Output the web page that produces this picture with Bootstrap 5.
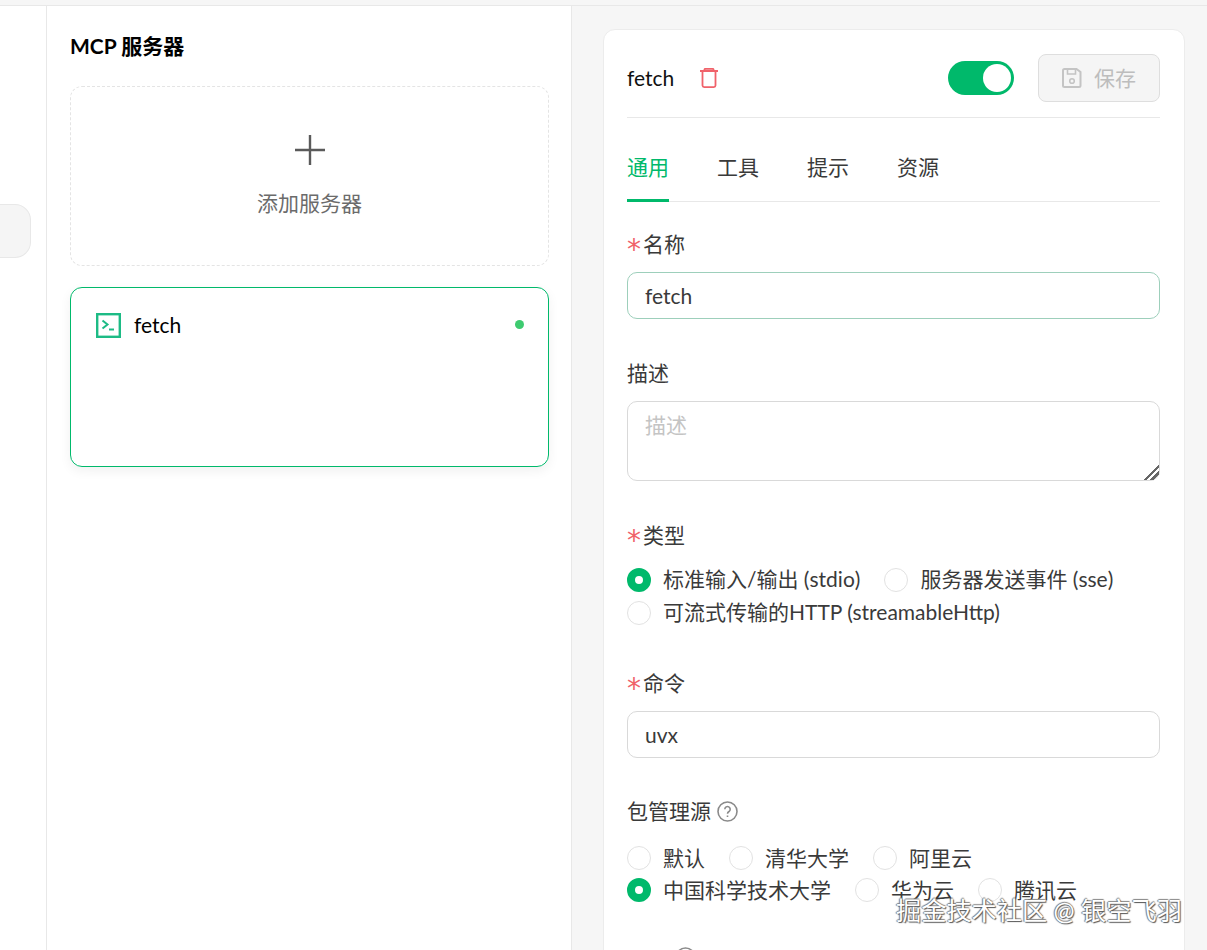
<!DOCTYPE html>
<html lang="zh-CN">
<head>
  <meta charset="UTF-8" />
  <title>MCP 服务器</title>
  <link href="https://cdn.jsdelivr.net/npm/bootstrap@5.3.2/dist/css/bootstrap.min.css" rel="stylesheet">
  <style>
    :root { --green: #00b96b; --line: #e8e8e8; --txt: #3a3a3a; }
    html, body { height: 100%; overflow: hidden; }
    body {
      position: relative;
      background: #f6f6f6;
      font-family: Lato, "Noto Sans CJK SC", sans-serif;
      font-size: 21px;
      line-height: 33px;
      color: var(--txt);
      padding-top: 5px;
    }
    .shell { height: 945px; border-top: 1px solid var(--line); }

    /* left rail */
    .rail { width: 47px; background: #fff; border-right: 1px solid var(--line); padding-top: 198px; }
    .rail-nub { width: 31px; height: 54px; background: #f5f5f5; border: 1px solid var(--line); border-left: 0; border-radius: 0 16px 16px 0; }

    /* server list */
    .server-col { width: 525px; background: #fff; border-right: 1px solid var(--line); padding: 23px 22px 0 23px; }
    .server-title { font-size: 21px; font-weight: 700; color: #000; line-height: 33px; margin: 0 0 24px; }
    .add-box { height: 180px; border: 1px dashed #e4e4e4; border-radius: 12px; color: #6b6b6b; margin-bottom: 21px; padding-top: 47px; }
    .add-box span { margin-top: 20px; }
    .server-item { height: 180px; border: 1px solid var(--green); border-radius: 12px; box-shadow: 0 4px 12px rgba(0,0,0,.06); padding: 21px 24px 0 25px; color: #000; }
    .server-item .item-name { margin-left: -3px; line-height: 31px; padding-bottom: 2px; }
    .status-dot { width: 9px; height: 9px; border-radius: 50%; background: #3ecb70; margin-top: -3px; }

    /* detail card */
    .detail-col { padding: 23px 22px 0 31px; flex: 1; min-width: 0; }
    .detail-card { background: #fff; border: 1px solid #ececec; border-radius: 12px 12px 0 0; height: 960px; padding: 24px 24px 0 23px; }
    .detail-head { height: 64px; border-bottom: 1px solid var(--line); padding-bottom: 16px; }
    .detail-name { color: #111; width: 73px; }
    .trash-icon { margin-top: 1px; }
    .sw { width: 66px; height: 34px; border-radius: 17px; background: var(--green); padding: 3px; }
    .sw i { width: 28px; height: 28px; border-radius: 50%; background: #fff; }
    .save-btn { width: 122px; height: 48px; background: #f5f5f5; border: 1px solid #dedede; border-radius: 8px; color: #bdbdbd; font-size: 21px; padding: 0; }
    .save-btn:disabled { background: #f5f5f5; border-color: #dedede; color: #bdbdbd; opacity: 1; }
    .tab-row { border-bottom: 1px solid var(--line); gap: 48px; margin-top: 33px; margin-bottom: 0; height: 51px; }
    .tab-row .nav-link { padding: 0; height: 51px; color: var(--txt); border-bottom: 3px solid transparent; line-height: 32px; background: none; }
    .tab-row .nav-link.active { color: var(--green); border-bottom-color: var(--green); }

    .field-label { display: block; line-height: 30px; padding-bottom: 3px; margin-bottom: 10px; }
    .req { font-family: "DejaVu Sans", sans-serif; color: #f0626a; margin-right: 2px; font-size: 28px; line-height: 0; vertical-align: -7px; }
    .detail-card .form-control {
      font-size: 21px; color: var(--txt); height: 47px; border-radius: 10px; border-color: #d9d9d9; padding: 0 17px; box-shadow: none; line-height: 33px;
    }
    .detail-card .form-control.is-hot { border-color: #9dcfbb; }
    .detail-card textarea.form-control { height: 80px; padding-top: 6px; }
    .detail-card textarea.form-control::-webkit-resizer {
      background: linear-gradient(135deg, transparent 48%, #666 48%, #666 60%, transparent 60%, transparent 70%, #666 70%, #666 82%, transparent 82%);
    }
    .detail-card .form-control::placeholder { color: #c4c4c4; }
    .fld-name { margin-top: 27px; margin-bottom: 39px; }
    .fld-desc { margin-bottom: 39px; }
    .fld-type { margin-bottom: 39px; }
    .fld-cmd { margin-bottom: 38px; }
    .fld-src .field-label { margin-bottom: 13px; }
    .fld-extra { padding: 41px 0 0 48px; }

    .radio-wrap { column-gap: 24px; }
    .radio-wrap .form-check { display: flex; align-items: center; margin: 0; padding: 0; min-height: 32px; height: 33px; gap: 12px; }
    .radio-wrap.tight .form-check { height: 32px; }
    .radio-wrap .form-check-input {
      float: none; margin: 0; width: 24px; height: 24px; border-color: #e2e2e2; box-shadow: none;
    }
    .radio-wrap .form-check-input:checked { background-color: #fff; background-image: none; border: 8px solid var(--green); }
    .radio-wrap .form-check-label { opacity: 1; line-height: 31px; padding-bottom: 2px; }
    .help-icon { margin-left: 6px; vertical-align: -3px; }

    /* watermark sits over the form */
    .watermark {
      position: absolute; left: 896px; top: 893px; font-size: 25.200px; line-height: 34px; color: #fff; white-space: nowrap;
      text-shadow: 1px 1px 1px #555, -1px 0 1px #777, 0 -1px 1px #888;
    }
  </style>
</head>
<body>
  <div class="shell d-flex">
    <div class="rail flex-shrink-0"><div class="rail-nub"></div></div>

    <div class="server-col flex-shrink-0">
      <h2 class="server-title">MCP 服务器</h2>
      <div class="add-box d-flex flex-column align-items-center">
        <svg width="32" height="32" viewBox="0 0 32 32" fill="none" stroke="#5a5a5a" stroke-width="2.4"><path d="M16 1v30M1 16h30"/></svg>
        <span>添加服务器</span>
      </div>
      <div class="server-item">
        <div class="d-flex align-items-center">
          <svg width="25" height="25" viewBox="0 0 25 25" fill="none" stroke="#1dbb85" stroke-width="2.4" class="me-3 flex-shrink-0"><rect x="1.200" y="1.200" width="22.600" height="22.600"/><path d="M6.500 7.500l5 4-5 4" stroke-width="2"/><path d="M13 16.500h5" stroke-width="2"/></svg>
          <span class="item-name flex-grow-1">fetch</span>
          <span class="status-dot"></span>
        </div>
      </div>
    </div>

    <div class="detail-col">
      <div class="detail-card">
        <div class="detail-head d-flex align-items-center">
          <span class="detail-name">fetch</span>
          <svg class="trash-icon" width="18" height="20" viewBox="0 0 18 20" fill="none" stroke="#f0626a" stroke-width="1.800" stroke-linejoin="round"><path d="M0 3h18M4 3l.8-2.100h8.400L14 3M2.500 3v14.500a1.700 1.700 0 0 0 1.700 1.600h9.600a1.700 1.700 0 0 0 1.700-1.600V3"/></svg>
          <div class="sw d-flex justify-content-end ms-auto me-4"><i></i></div>
          <button class="btn save-btn d-flex align-items-center justify-content-center gap-2" disabled>
            <svg width="20" height="20" viewBox="0 0 20 20" fill="none" stroke="#c4c4c4" stroke-width="2"><path d="M2.500 1h12l4 3v13.500a1.500 1.500 0 0 1-1.500 1.500H2.500A1.500 1.500 0 0 1 1 17.500V2.500A1.500 1.500 0 0 1 2.500 1z"/><path d="M5.500 1v5h8V1" stroke-width="1.600"/><circle cx="10" cy="13" r="2.300" stroke-width="1.600"/></svg>
            <span class="ms-1">保存</span>
          </button>
        </div>

        <ul class="nav tab-row">
          <li class="nav-item"><a class="nav-link active" href="#">通用</a></li>
          <li class="nav-item"><a class="nav-link" href="#">工具</a></li>
          <li class="nav-item"><a class="nav-link" href="#">提示</a></li>
          <li class="nav-item"><a class="nav-link" href="#">资源</a></li>
        </ul>

        <div class="fld-name">
          <label class="field-label"><span class="req">*</span>名称</label>
          <input class="form-control is-hot" type="text" value="fetch">
        </div>
        <div class="fld-desc">
          <label class="field-label">描述</label>
          <textarea class="form-control" placeholder="描述"></textarea>
        </div>
        <div class="fld-type">
          <label class="field-label"><span class="req">*</span>类型</label>
          <div class="radio-wrap d-flex flex-wrap">
            <div class="form-check"><input class="form-check-input" type="radio" name="kind" checked><label class="form-check-label">标准输入/输出 (stdio)</label></div>
            <div class="form-check"><input class="form-check-input" type="radio" name="kind"><label class="form-check-label">服务器发送事件 (sse)</label></div>
            <div class="form-check"><input class="form-check-input" type="radio" name="kind"><label class="form-check-label">可流式传输的HTTP (streamableHttp)</label></div>
          </div>
        </div>
        <div class="fld-cmd">
          <label class="field-label"><span class="req">*</span>命令</label>
          <input class="form-control" type="text" value="uvx">
        </div>
        <div class="fld-src">
          <label class="field-label">包管理源<svg class="help-icon" width="21" height="21" viewBox="0 0 21 21" fill="none" stroke="#8a8a8a" stroke-width="1.600"><circle cx="10.500" cy="10.500" r="9.500"/><path d="M7.800 8.200a2.700 2.700 0 1 1 4.200 2.300c-1 .6-1.500 1.100-1.500 2.300M10.500 14.500v1.600"/></svg></label>
          <div class="radio-wrap tight d-flex flex-wrap">
            <div class="form-check"><input class="form-check-input" type="radio" name="src"><label class="form-check-label">默认</label></div>
            <div class="form-check"><input class="form-check-input" type="radio" name="src"><label class="form-check-label">清华大学</label></div>
            <div class="form-check"><input class="form-check-input" type="radio" name="src"><label class="form-check-label">阿里云</label></div>
            <div class="w-100"></div>
            <div class="form-check"><input class="form-check-input" type="radio" name="src" checked><label class="form-check-label">中国科学技术大学</label></div>
            <div class="form-check"><input class="form-check-input" type="radio" name="src"><label class="form-check-label">华为云</label></div>
            <div class="form-check"><input class="form-check-input" type="radio" name="src"><label class="form-check-label">腾讯云</label></div>
          </div>
        </div>
        <div class="fld-extra">
          <svg width="21" height="21" viewBox="0 0 21 21" fill="none" stroke="#8a8a8a" stroke-width="1.600" class="d-block"><circle cx="10.500" cy="10.500" r="9.500"/></svg>
        </div>
      </div>
    </div>
  </div>
  <div class="watermark">掘金技术社区 @ 银空飞羽</div>
  <script src="https://cdn.jsdelivr.net/npm/bootstrap@5.3.2/dist/js/bootstrap.bundle.min.js"></script>
</body>
</html>
